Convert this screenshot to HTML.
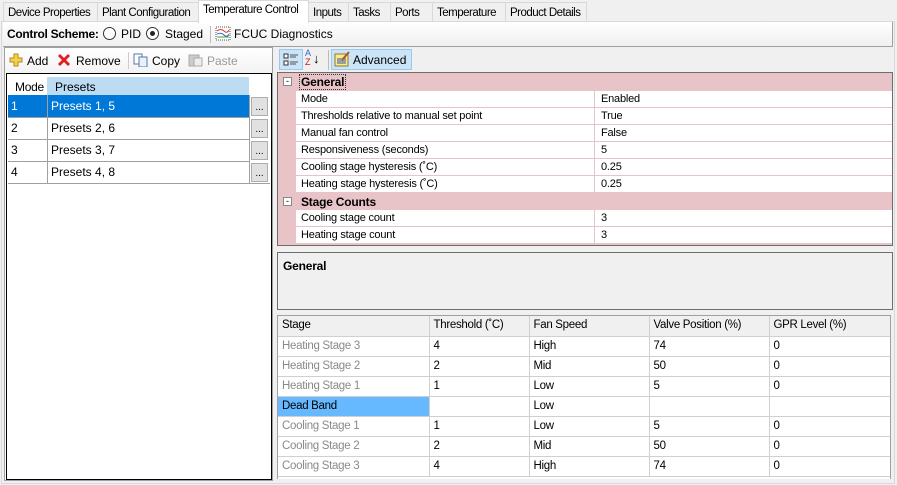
<!DOCTYPE html>
<html><head><meta charset="utf-8"><style>
*{box-sizing:border-box;margin:0;padding:0}
body{width:897px;height:485px;background:#f0f0f0;font-family:"Liberation Sans",sans-serif;font-size:12px;color:#000;position:relative;overflow:hidden}
.a{position:absolute;white-space:nowrap}
.tab{position:absolute;top:2px;height:20px;border:1px solid #d9d9d9;border-bottom:none;background:#f0f0f0;padding:4px 0 0 4px;font-size:11.5px;letter-spacing:-0.5px;white-space:nowrap;overflow:hidden}
.pg{font-size:11px;letter-spacing:-0.2px}
.row{position:absolute;left:296px;width:596px;height:17px;background:#fff;border-bottom:1px solid #e8c4c9}
.row span{position:absolute;top:2px}
.sg td{height:20px;border-right:1px solid #d0d0d0;border-bottom:1px solid #d0d0d0;padding:3px 0 0 4px;font-size:11.5px;letter-spacing:-0.3px;vertical-align:top;white-space:nowrap}
.g{color:#8a8a8a}
</style></head><body>
<!-- tabs -->
<div class="tab" style="left:3px;width:95px">Device Properties</div>
<div class="tab" style="left:97px;width:102px">Plant Configuration</div>
<div class="tab" style="left:198px;width:111px;top:0;height:23px;background:#fff;z-index:2;padding-top:3px">Temperature Control</div>
<div class="tab" style="left:308px;width:41px">Inputs</div>
<div class="tab" style="left:348px;width:43px">Tasks</div>
<div class="tab" style="left:390px;width:43px">Ports</div>
<div class="tab" style="left:432px;width:74px">Temperature</div>
<div class="tab" style="left:505px;width:82px">Product Details</div>
<!-- page -->
<div class="a" style="left:1px;top:21px;width:894px;height:463px;border:1px solid #d9d9d9;background:#f0f0f0"></div>
<div class="a" style="left:3px;top:22px;width:890px;height:25px;background:linear-gradient(#fff,#f0f0f0);border-bottom:1px solid #a0a0a0;border-right:1px solid #a0a0a0"></div>
<div class="a" style="left:7px;top:27px;font-weight:bold;letter-spacing:-0.3px">Control Scheme:</div>
<div class="a" style="left:103px;top:27px;width:13px;height:13px;border:1px solid #333;border-radius:50%;background:#fff"></div>
<div class="a" style="left:121px;top:27px">PID</div>
<div class="a" style="left:146px;top:27px;width:13px;height:13px;border:1px solid #333;border-radius:50%;background:#fff"><div style="margin:3px;width:5px;height:5px;border-radius:50%;background:#222"></div></div>
<div class="a" style="left:165px;top:27px">Staged</div>
<div class="a" style="left:210px;top:26px;width:1px;height:17px;background:#bbb"></div>
<svg class="a" style="left:215px;top:26px" width="16" height="16"><rect x="1" y="1" width="14" height="13" fill="#fff" stroke="#555" stroke-dasharray="1,1"/><path d="M2 5 Q6 2 9 5 T14 4" stroke="#d33" fill="none"/><path d="M2 8 Q6 6 9 9 T14 8" stroke="#36c" fill="none"/><path d="M2 11 H14" stroke="#3a3" fill="none"/></svg>
<div class="a" style="left:234px;top:27px">FCUC Diagnostics</div>
<!-- left panel -->
<div class="a" style="left:4px;top:47px;width:269px;height:434px;border:1px solid #a0a0a0;background:#fff"></div>
<div class="a" style="left:5px;top:48px;width:267px;height:25px;background:linear-gradient(#fff,#f3f3f3)"></div>
<svg class="a" style="left:9px;top:53px" width="14" height="14"><path d="M5 1h4v4h4v4H9v4H5V9H1V5h4z" fill="#f5d24a" stroke="#b28a1a"/></svg>
<div class="a" style="left:27px;top:54px">Add</div>
<svg class="a" style="left:57px;top:53px" width="14" height="14"><path d="M2 2L12 12M12 2L2 12" stroke="#d22" stroke-width="3"/></svg>
<div class="a" style="left:76px;top:54px">Remove</div>
<div class="a" style="left:128px;top:52px;width:1px;height:17px;background:#ccc"></div>
<svg class="a" style="left:133px;top:53px" width="16" height="14"><rect x="1" y="1" width="8" height="10" fill="#fff" stroke="#5577aa"/><rect x="6" y="4" width="8" height="10" fill="#e8f0fa" stroke="#5577aa"/></svg>
<div class="a" style="left:152px;top:54px">Copy</div>
<svg class="a" style="left:188px;top:52px" width="16" height="15"><rect x="1" y="3" width="10" height="11" fill="#ccc" stroke="#aaa"/><rect x="6" y="6" width="8" height="8" fill="#eee" stroke="#aaa"/></svg>
<div class="a" style="left:207px;top:54px;color:#999">Paste</div>
<div class="a" style="left:6px;top:73px;width:266px;height:407px;border:1px solid #000;background:#fff"></div>
<div class="a" style="left:47px;top:77px;width:202px;height:18px;background:#bcdcf4"></div>
<div class="a" style="left:15px;top:80px;letter-spacing:-0.3px">Mode</div>
<div class="a" style="left:55px;top:80px">Presets</div>
<div class="a" style="left:8px;top:95px;width:241px;height:22px;background:#0078d7"></div>
<div class="a" style="left:8px;top:117px;width:241px;height:67px;border-top:1px solid #a0a0a0"></div>
<div class="a" style="left:8px;top:139px;width:241px;height:1px;background:#a0a0a0"></div>
<div class="a" style="left:8px;top:161px;width:241px;height:1px;background:#a0a0a0"></div>
<div class="a" style="left:8px;top:183px;width:262px;height:1px;background:#a0a0a0"></div>
<div class="a" style="left:47px;top:95px;width:1px;height:89px;background:#a0a0a0"></div>
<div class="a" style="left:249px;top:95px;width:1px;height:89px;background:#a0a0a0"></div>
<div class="a" style="left:11px;top:99px;color:#fff">1</div><div class="a" style="left:51px;top:99px;color:#fff">Presets 1, 5</div>
<div class="a" style="left:11px;top:121px">2</div><div class="a" style="left:51px;top:121px">Presets 2, 6</div>
<div class="a" style="left:11px;top:143px">3</div><div class="a" style="left:51px;top:143px">Presets 3, 7</div>
<div class="a" style="left:11px;top:165px">4</div><div class="a" style="left:51px;top:165px">Presets 4, 8</div>
<div class="a" style="left:251px;top:97px;width:17px;height:19px;background:#e1e1e1;border:1px solid #adadad;font-size:10px;text-align:center;line-height:20px">...</div>
<div class="a" style="left:251px;top:119px;width:17px;height:19px;background:#e1e1e1;border:1px solid #adadad;font-size:10px;text-align:center;line-height:20px">...</div>
<div class="a" style="left:251px;top:141px;width:17px;height:19px;background:#e1e1e1;border:1px solid #adadad;font-size:10px;text-align:center;line-height:20px">...</div>
<div class="a" style="left:251px;top:163px;width:17px;height:19px;background:#e1e1e1;border:1px solid #adadad;font-size:10px;text-align:center;line-height:20px">...</div>
<!-- right toolbar -->
<div class="a" style="left:279px;top:49px;width:24px;height:21px;background:#cce4f7;border:1px solid #99c9ef"></div>
<svg class="a" style="left:283px;top:52px" width="16" height="15"><rect x="1" y="2" width="4" height="4" fill="#fff" stroke="#333"/><rect x="1" y="9" width="4" height="4" fill="#fff" stroke="#333"/><path d="M7 3h8M7 5h6M7 10h8M7 12h6" stroke="#555"/></svg>
<div class="a" style="left:305px;top:49px;font-size:9px;line-height:9px;color:#36c">A<br><span style="color:#b22">Z</span></div>
<div class="a" style="left:313px;top:51px;font-size:13px">↓</div>
<div class="a" style="left:328px;top:50px;width:1px;height:20px;background:#bbb"></div>
<div class="a" style="left:331px;top:49px;width:81px;height:21px;background:#cce4f7;border:1px solid #99c9ef"></div>
<svg class="a" style="left:334px;top:51px" width="17" height="17"><rect x="1" y="3" width="13" height="12" fill="#fbe98a" stroke="#8a7a2a"/><path d="M3 8h9M3 10h9M3 12h9" stroke="#35a"/><path d="M8 9L15 1" stroke="#a53" stroke-width="2"/></svg>
<div class="a" style="left:353px;top:53px">Advanced</div>
<!-- property grid -->
<div class="a" style="left:277px;top:72px;width:616px;height:174px;border:1px solid #6d6d6d;background:#e8c4c9"></div>
<div class="a" style="left:296px;top:74px;width:596px;height:17px;background:#e8c4c9"></div>
<div class="a" style="left:283px;top:77px;width:9px;height:9px;border:1px solid #888;background:#fff;font-size:9px;line-height:6px;text-align:center">-</div>
<div class="a pg" style="left:300px;top:75px;font-weight:bold;font-size:12px;outline:1px dotted #333;padding:0 1px">General</div>
<div class="row" style="top:91px"><span style="left:5px" class="pg">Mode</span><span style="left:305px" class="pg">Enabled</span></div>
<div class="row" style="top:108px"><span style="left:5px" class="pg">Thresholds relative to manual set point</span><span style="left:305px" class="pg">True</span></div>
<div class="row" style="top:125px"><span style="left:5px" class="pg">Manual fan control</span><span style="left:305px" class="pg">False</span></div>
<div class="row" style="top:142px"><span style="left:5px" class="pg">Responsiveness (seconds)</span><span style="left:305px" class="pg">5</span></div>
<div class="row" style="top:159px"><span style="left:5px" class="pg">Cooling stage hysteresis (˚C)</span><span style="left:305px" class="pg">0.25</span></div>
<div class="row" style="top:176px"><span style="left:5px" class="pg">Heating stage hysteresis (˚C)</span><span style="left:305px" class="pg">0.25</span></div>
<div class="a" style="left:283px;top:197px;width:9px;height:9px;border:1px solid #888;background:#fff;font-size:9px;line-height:6px;text-align:center">-</div>
<div class="a pg" style="left:301px;top:195px;font-weight:bold;font-size:12px">Stage Counts</div>
<div class="row" style="top:210px"><span style="left:5px" class="pg">Cooling stage count</span><span style="left:305px" class="pg">3</span></div>
<div class="row" style="top:227px"><span style="left:5px" class="pg">Heating stage count</span><span style="left:305px" class="pg">3</span></div>
<div class="a" style="left:594px;top:91px;width:1px;height:102px;background:#e8c4c9"></div>
<div class="a" style="left:594px;top:210px;width:1px;height:34px;background:#e8c4c9"></div>
<!-- description -->
<div class="a" style="left:277px;top:252px;width:616px;height:58px;border:1px solid #6d6d6d;background:#f0f0f0"></div>
<div class="a pg" style="left:283px;top:259px;font-weight:bold;font-size:12px">General</div>
<!-- stage grid -->
<div class="a" style="left:277px;top:315px;width:614px;height:164px;border:1px solid #a0a0a0;border-bottom:none;background:#fff;overflow:hidden">
<table class="sg" style="border-collapse:collapse;width:612px;table-layout:fixed">
<colgroup><col style="width:151px"><col style="width:100px"><col style="width:120px"><col style="width:120px"><col style="width:121px"></colgroup>
<tr style="background:#f0f0f0"><td>Stage</td><td>Threshold (˚C)</td><td>Fan Speed</td><td>Valve Position (%)</td><td>GPR Level (%)</td></tr>
<tr><td class="g">Heating Stage 3</td><td>4</td><td>High</td><td>74</td><td>0</td></tr>
<tr><td class="g">Heating Stage 2</td><td>2</td><td>Mid</td><td>50</td><td>0</td></tr>
<tr><td class="g">Heating Stage 1</td><td>1</td><td>Low</td><td>5</td><td>0</td></tr>
<tr><td style="background:#66b8ff">Dead Band</td><td></td><td>Low</td><td></td><td></td></tr>
<tr><td class="g">Cooling Stage 1</td><td>1</td><td>Low</td><td>5</td><td>0</td></tr>
<tr><td class="g">Cooling Stage 2</td><td>2</td><td>Mid</td><td>50</td><td>0</td></tr>
<tr><td class="g">Cooling Stage 3</td><td>4</td><td>High</td><td>74</td><td>0</td></tr>
</table></div>
</body></html>
